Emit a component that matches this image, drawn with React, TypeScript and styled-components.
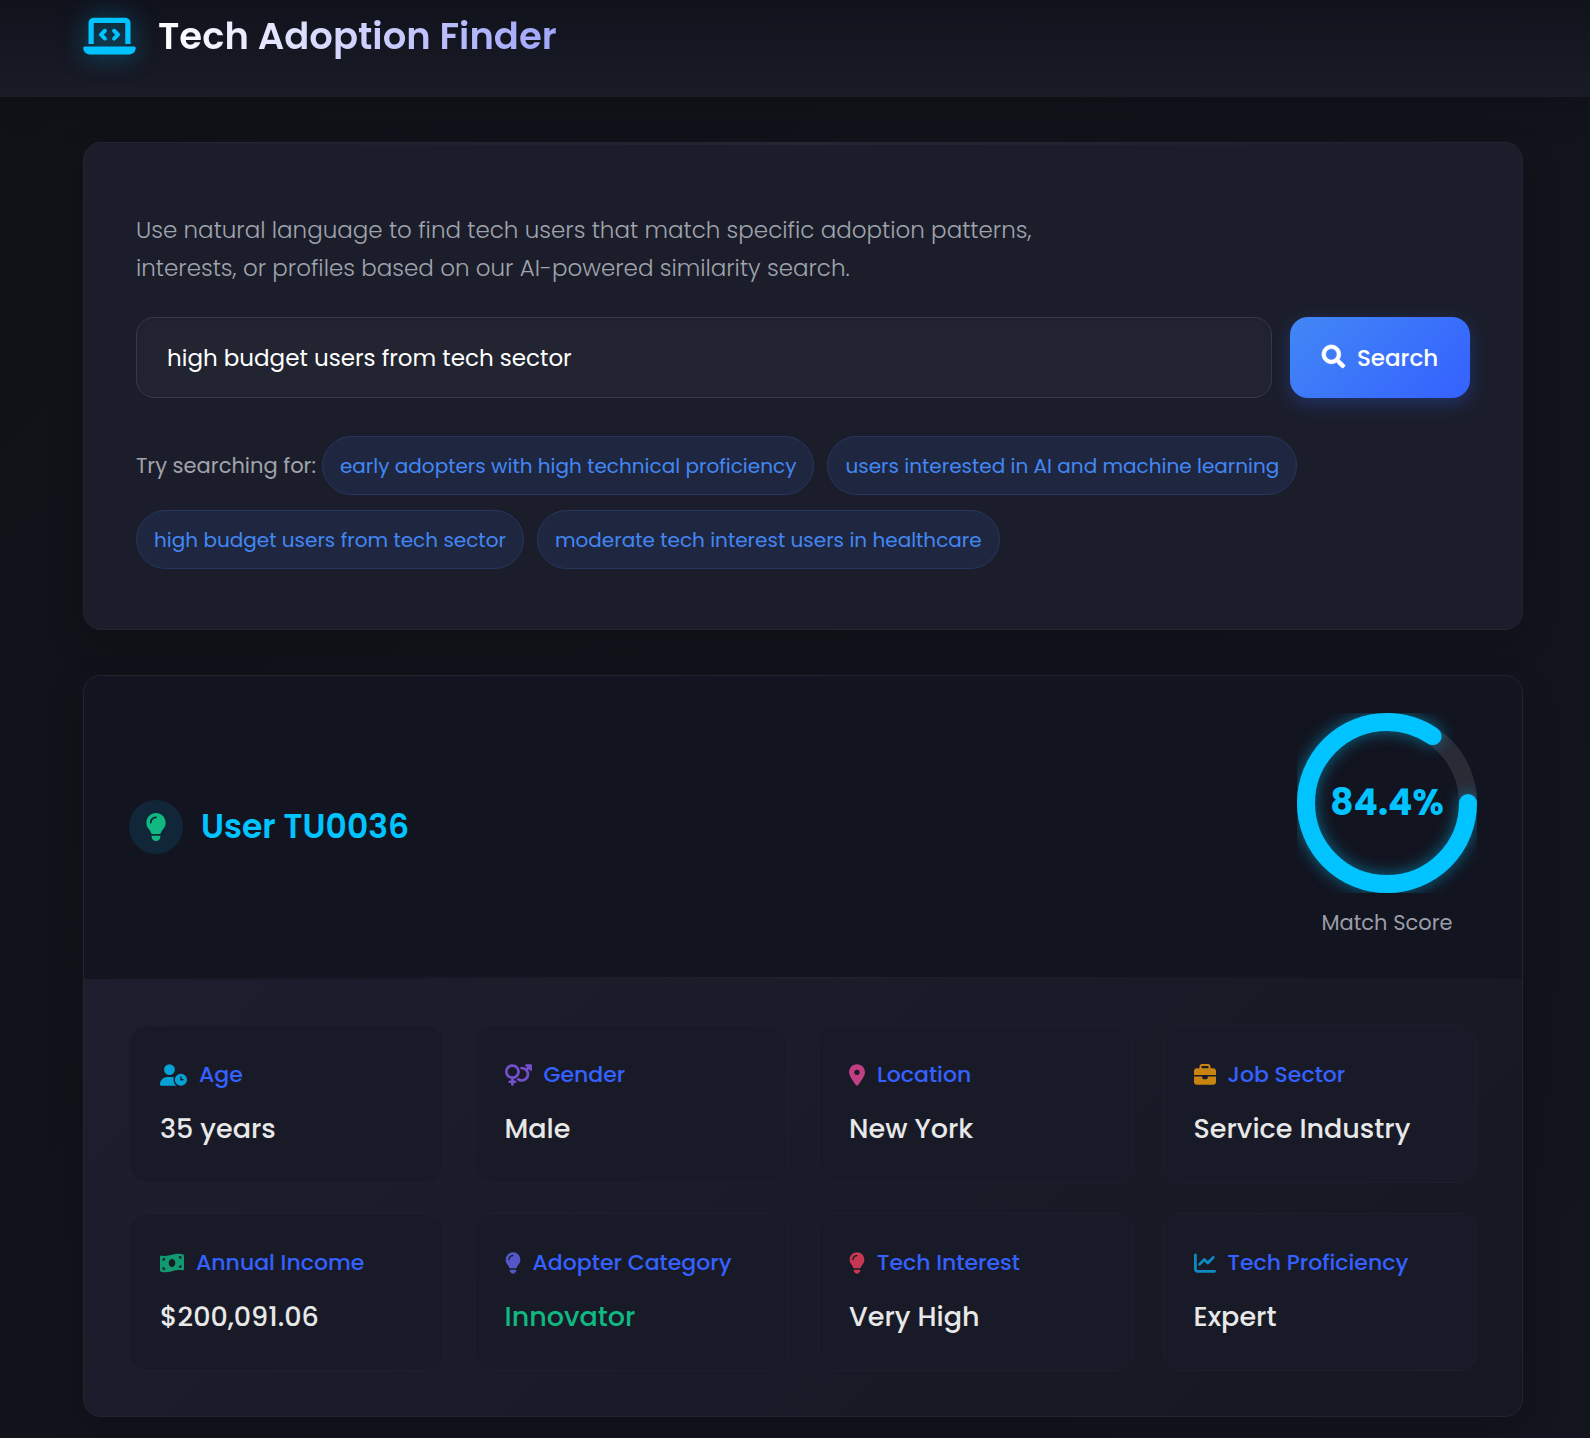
import React, { useState } from "react";
import styled, { createGlobalStyle } from "styled-components";
import { FaSearch } from "react-icons/fa";
import {
  FaBriefcase,
  FaChartLine,
  FaLaptopCode,
  FaLightbulb,
  FaLocationDot,
  FaMoneyBillWave,
  FaUserClock,
  FaVenusMars,
} from "react-icons/fa6";

const GlobalStyle = createGlobalStyle`
  *, *::before, *::after {
    box-sizing: border-box;
  }

  body {
    margin: 0;
    min-height: 100vh;
    background: linear-gradient(135deg, #0f1217 0%, #11141b 50%, #13151f 100%);
    color: #e8e8e8;
    font-family: Poppins, Inter, "Open Sans", sans-serif;
    font-size: 23px;
    line-height: 38px;
  }

  button, input {
    font-family: inherit;
  }
`;

const TopBar = styled.header`
  padding: 0 67px 25px 83px;
  background: linear-gradient(180deg, #10121c 0%, #191b26 100%);
  box-shadow: 0 6px 36px rgba(0, 0, 0, 0.2);
`;

const Brand = styled.div`
  display: flex;
  align-items: center;
  gap: 22px;
  height: 72px;

  svg {
    width: 53px;
    height: 42px;
    color: #00c3ff;
    filter: drop-shadow(0 0 12px rgba(0, 195, 255, 0.5));
  }
`;

const BrandTitle = styled.h1`
  margin: 0;
  font-size: 37px;
  font-weight: 600;
  line-height: 48px;
  color: transparent;
  background: linear-gradient(90deg, #ffffff 0%, #a0a5fb 100%);
  background-clip: text;
  -webkit-background-clip: text;
`;

const Page = styled.main`
  display: flex;
  flex-direction: column;
  gap: 45px;
  padding: 45px 67px 21px 83px;
`;

const Panel = styled.section`
  border: 1px solid #222531;
  border-radius: 18px;
  box-shadow: 0 12px 36px rgba(0, 0, 0, 0.2);
  overflow: hidden;
`;

const SearchPanel = styled(Panel)`
  padding: 0 52px 60px;
  background: #1b1e2a;

  &::before {
    content: "";
    display: block;
    height: 2px;
    margin-bottom: 66px;
    background: linear-gradient(90deg, transparent, rgba(255, 255, 255, 0.04), transparent);
  }
`;

const Intro = styled.p`
  max-width: 900px;
  margin: 0 0 30px;
  font-weight: 300;
  color: #a0a4ae;
`;

const SearchForm = styled.form`
  display: flex;
  gap: 18px;
  margin-bottom: 38px;
`;

const SearchInput = styled.input`
  flex: 1;
  min-width: 0;
  height: 81px;
  padding: 0 30px;
  border: 1px solid #373946;
  border-radius: 18px;
  background: #232432;
  box-shadow: inset 0 3px 9px rgba(0, 0, 0, 0.1);
  color: #ffffff;
  font-size: 23px;
  outline: none;
`;

const SearchButton = styled.button`
  display: flex;
  align-items: center;
  justify-content: center;
  gap: 12px;
  width: 180px;
  height: 81px;
  border: 0;
  border-radius: 18px;
  background: linear-gradient(135deg, #4287f5 0%, #3461ff 100%);
  box-shadow: 0 6px 18px rgba(52, 97, 255, 0.3);
  color: #ffffff;
  font-size: 23px;
  font-weight: 500;
  cursor: pointer;

  svg {
    width: 23px;
    height: 23px;
    margin-bottom: 2px;
    overflow: visible;
    stroke-width: 16;
  }
`;

const Suggestions = styled.div`
  display: flex;
  flex-wrap: wrap;
  align-items: center;
  row-gap: 15px;
`;

const SuggestionLabel = styled.span`
  margin-right: 6px;
  font-size: 21px;
  color: #a0a4ae;
`;

const Chip = styled.button`
  height: 59px;
  margin-right: 13px;
  padding: 0 17px;
  border: 1px solid #25375f;
  border-radius: 30px;
  background: #1f2740;
  color: #4287f5;
  font-size: 20px;
  cursor: pointer;
`;

const ResultPanel = styled(Panel)`
  background: linear-gradient(135deg, #1e2030 0%, #151722 100%);
`;

const ResultHeader = styled.div`
  display: flex;
  align-items: center;
  justify-content: space-between;
  padding: 37px 45px 38px;
  background: #12141f;
`;

const HeaderRule = styled.div`
  height: 2px;
  margin-top: -2px;
  background: linear-gradient(90deg, transparent, rgba(255, 255, 255, 0.05), transparent);
`;

const UserHeading = styled.h2`
  display: flex;
  align-items: center;
  gap: 18px;
  margin: 0;
  font-size: 33px;
  font-weight: 600;
  line-height: 54px;
  color: #00c3ff;
`;

const UserBadge = styled.span`
  display: flex;
  align-items: center;
  justify-content: center;
  width: 54px;
  height: 54px;
  border-radius: 50%;
  background: #112638;
  color: #10b981;
`;

const Score = styled.div`
  display: flex;
  flex-direction: column;
  align-items: center;
  gap: 12px;
`;

const ScoreRing = styled.div`
  display: grid;
  place-items: center;

  > * {
    grid-area: 1 / 1;
  }

  svg {
    display: block;
  }
`;

const ScoreArc = styled.circle`
  fill: none;
  stroke: #00c3ff;
  stroke-width: 18;
  stroke-linecap: round;
  filter: drop-shadow(0 0 8px rgba(0, 195, 255, 0.5));
`;

const ScoreTrack = styled.circle`
  fill: none;
  stroke: rgba(255, 255, 255, 0.1);
  stroke-width: 18;
`;

const ScoreValue = styled.span`
  font-size: 36px;
  font-weight: 700;
  color: #00c3ff;
`;

const ScoreLabel = styled.span`
  font-size: 21px;
  line-height: 36px;
  color: #9a9ea8;
`;

const DetailGrid = styled.dl`
  display: grid;
  grid-template-columns: repeat(4, minmax(0, 1fr));
  gap: 30px;
  margin: 0;
  padding: 46px 45px 45px;
`;

const DetailCard = styled.div`
  min-height: 158px;
  padding: 30px;
  border: 1px solid #1c202c;
  border-radius: 18px;
  background: #181b27;
`;

const DetailLabel = styled.dt`
  display: flex;
  align-items: center;
  gap: 12px;
  margin-bottom: 18px;
  font-size: 22px;
  font-weight: 500;
  line-height: 38px;
  color: #3461ff;
`;

const DetailIcon = styled.span<{ $color: string; $width: number }>`
  display: flex;
  color: ${(p) => p.$color};
  opacity: 0.8;

  svg {
    width: ${(p) => p.$width}px;
    height: 22px;
  }
`;

const DetailValue = styled.dd<{ $color?: string }>`
  margin: 0;
  font-size: 27px;
  font-weight: 500;
  line-height: 34px;
  color: ${(p) => p.$color ?? "#e8e8e8"};
`;

const suggestions = [
  "early adopters with high technical proficiency",
  "users interested in AI and machine learning",
  "high budget users from tech sector",
  "moderate tech interest users in healthcare",
];

const details = [
  { label: "Age", value: "35 years", icon: FaUserClock, iconWidth: 27, color: "#00c3ff" },
  { label: "Gender", value: "Male", icon: FaVenusMars, iconWidth: 27, color: "#8b5cf6" },
  { label: "Location", value: "New York", icon: FaLocationDot, iconWidth: 16, color: "#ec4899" },
  { label: "Job Sector", value: "Service Industry", icon: FaBriefcase, iconWidth: 22, color: "#f59e0b" },
  { label: "Annual Income", value: "$200,091.06", icon: FaMoneyBillWave, iconWidth: 24, color: "#10b981" },
  {
    label: "Adopter Category",
    value: "Innovator",
    icon: FaLightbulb,
    iconWidth: 16,
    color: "#6366f1",
    valueColor: "#10b981",
  },
  { label: "Tech Interest", value: "Very High", icon: FaLightbulb, iconWidth: 16, color: "#f43f5e" },
  { label: "Tech Proficiency", value: "Expert", icon: FaChartLine, iconWidth: 22, color: "#0ea5e9" },
];

const score = 84.4;
const radius = 81;
const circumference = 2 * Math.PI * radius;

export default function App() {
  const [query, setQuery] = useState("high budget users from tech sector");

  return (
    <>
      <GlobalStyle />
      <TopBar>
        <Brand>
          <FaLaptopCode aria-hidden="true" />
          <BrandTitle>Tech Adoption Finder</BrandTitle>
        </Brand>
      </TopBar>
      <Page>
        <SearchPanel>
          <Intro>
            Use natural language to find tech users that match specific adoption patterns,
            interests, or profiles based on our AI-powered similarity search.
          </Intro>
          <SearchForm onSubmit={(e: React.FormEvent) => e.preventDefault()}>
            <SearchInput
              aria-label="Search users"
              value={query}
              onChange={(e: React.ChangeEvent<HTMLInputElement>) => setQuery(e.target.value)}
            />
            <SearchButton type="submit">
              <FaSearch aria-hidden="true" />
              Search
            </SearchButton>
          </SearchForm>
          <Suggestions>
            <SuggestionLabel>Try searching for:</SuggestionLabel>
            {suggestions.map((text) => (
              <Chip key={text} type="button" onClick={() => setQuery(text)}>
                {text}
              </Chip>
            ))}
          </Suggestions>
        </SearchPanel>
        <ResultPanel>
          <ResultHeader>
            <UserHeading>
              <UserBadge>
                <FaLightbulb size={28} />
              </UserBadge>
              User TU0036
            </UserHeading>
            <Score>
              <ScoreRing>
                <svg width="180" height="180" viewBox="0 0 180 180" aria-hidden="true">
                  <ScoreTrack cx="90" cy="90" r={radius} />
                  <ScoreArc
                    cx="90"
                    cy="90"
                    r={radius}
                    strokeDasharray={`${(circumference * score) / 100} ${circumference}`}
                  />
                </svg>
                <ScoreValue>{score}%</ScoreValue>
              </ScoreRing>
              <ScoreLabel>Match Score</ScoreLabel>
            </Score>
          </ResultHeader>
          <HeaderRule />
          <DetailGrid>
            {details.map(({ label, value, icon: Icon, iconWidth, color, valueColor }) => (
              <DetailCard key={label}>
                <DetailLabel>
                  <DetailIcon $color={color} $width={iconWidth}>
                    <Icon aria-hidden="true" />
                  </DetailIcon>
                  {label}
                </DetailLabel>
                <DetailValue $color={valueColor}>{value}</DetailValue>
              </DetailCard>
            ))}
          </DetailGrid>
        </ResultPanel>
      </Page>
    </>
  );
}
